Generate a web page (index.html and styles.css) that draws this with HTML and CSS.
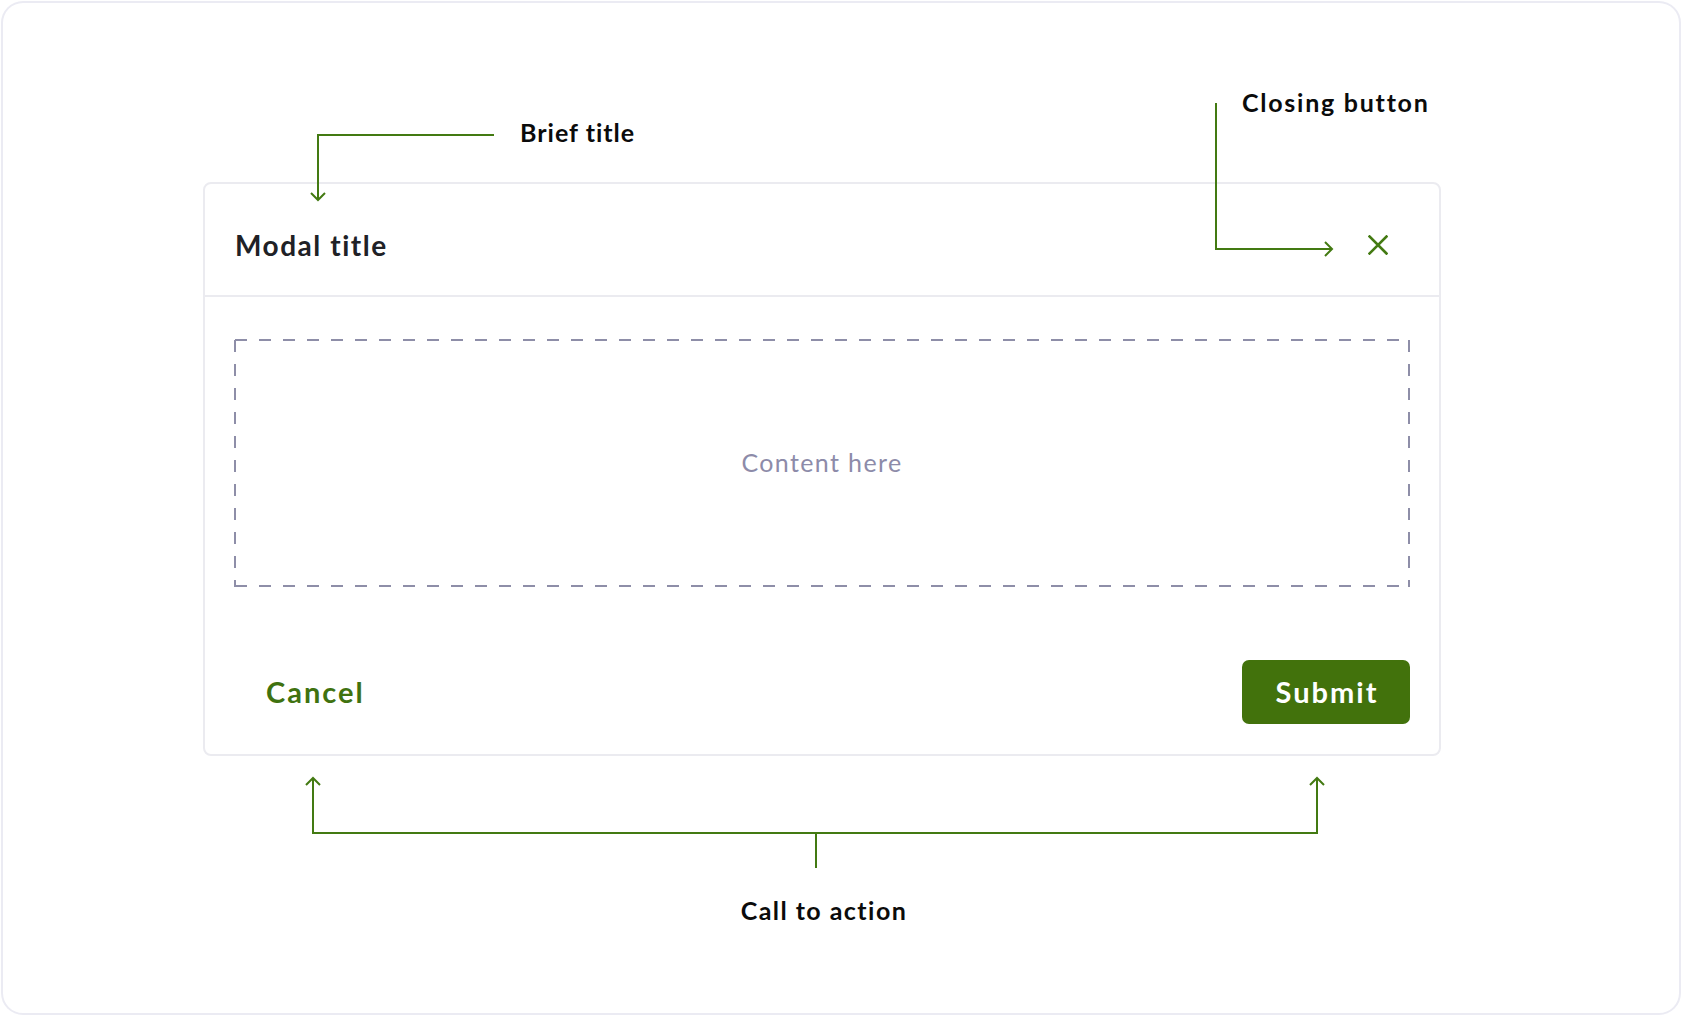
FILE: index.html
```html
<!DOCTYPE html>
<html lang="en">
<head>
<meta charset="utf-8">
<title>Modal anatomy</title>
<link rel="stylesheet" href="styles.css">
</head>
<body>
<div class="frame">
  <div class="modal">
    <div class="modal-header">
      <h2 class="modal-title">Modal title</h2>
      <button class="close-btn" aria-label="Close">
        <svg width="20" height="20" viewBox="0 0 20 20"><path d="M1.5 1.5 L18.5 18.5 M18.5 1.5 L1.5 18.5" stroke="#437a12" stroke-width="2.6" fill="none" stroke-linecap="square"/></svg>
      </button>
    </div>
    <div class="modal-body">
      <div class="placeholder">Content here</div>
    </div>
    <div class="modal-footer">
      <button class="btn-cancel">Cancel</button>
      <button class="btn-submit">Submit</button>
    </div>
  </div>

  <svg class="connectors" width="1680" height="1014" viewBox="1 1 1680 1014">
    <g stroke="#437a12" stroke-width="2" fill="none">
      <path d="M494 135 H318 V199"/>
      <path d="M311 193 L318 200 L325 193"/>
      <path d="M1216 103 V249 H1331"/>
      <path d="M1325 242 L1332 249 L1325 256"/>
      <path d="M313 779 V833 H1317 V779"/>
      <path d="M306 785 L313 778 L320 785"/>
      <path d="M1310 785 L1317 778 L1324 785"/>
      <path d="M816 833 V868"/>
    </g>
  </svg>

  <div class="label label-brief">Brief title</div>
  <div class="label label-close">Closing button</div>
  <div class="label label-cta">Call to action</div>
</div>
</body>
</html>
```

FILE: styles.css
```css
* {
  box-sizing: border-box;
}

html, body {
  margin: 0;
  background: #ffffff;
}

body {
  padding: 1px;
  font-family: Lato, "Noto Sans", "Liberation Sans", sans-serif;
}

.frame {
  position: relative;
  height: 1014px;
  border-radius: 22px;
  box-shadow: inset 0 0 0 2px #ebebf3;
  padding: 181px 0 0 202px;
}

.modal {
  width: 1238px;
  border: 2px solid #ebebf0;
  border-radius: 8px;
  background: #fff;
}

.modal-header {
  height: 113px;
  display: flex;
  align-items: center;
  justify-content: space-between;
  padding: 11px 31px 0 30px;
  border-bottom: 2px solid #ebebf0;
}

.modal-title {
  margin: 0;
  font-size: 28px;
  line-height: 34px;
  font-weight: 700;
  letter-spacing: 0.055em;
  color: #202126;
}

.close-btn {
  width: 60px;
  height: 60px;
  border: 0;
  padding: 0;
  background: transparent;
  display: flex;
  align-items: center;
  justify-content: center;
}

.close-btn svg {
  display: block;
}

.modal-body {
  padding: 42px 29px 0;
}

.placeholder {
  height: 248px;
  display: flex;
  align-items: center;
  justify-content: center;
  font-size: 25px;
  letter-spacing: 0.055em;
  padding-bottom: 2px;
  color: #8d8ba9;
  background:
    linear-gradient(90deg, #8e8ea8 50%, transparent 50%) 1px 0 / 24px 2px repeat-x,
    linear-gradient(90deg, #8e8ea8 50%, transparent 50%) 1px 100% / 24px 2px repeat-x,
    linear-gradient(180deg, #8e8ea8 50%, transparent 50%) 0 1px / 2px 24px repeat-y,
    linear-gradient(180deg, #8e8ea8 50%, transparent 50%) 100% 1px / 2px 24px repeat-y;
}

.modal-footer {
  display: flex;
  justify-content: space-between;
  align-items: center;
  padding: 73px 29px 30px;
}

.btn-cancel,
.btn-submit {
  height: 64px;
  border: 0;
  font-family: Lato, "Noto Sans", "Liberation Sans", sans-serif;
  font-size: 29px;
  font-weight: 700;
  letter-spacing: 0.07em;
  line-height: 62px;
  border-radius: 7px;
}

.btn-cancel {
  background: transparent;
  color: #3f7210;
  padding: 0 32px;
}

.btn-submit {
  width: 168px;
  padding: 0 0 0 2px;
  background: #42720c;
  color: #ffffff;
}

.connectors {
  position: absolute;
  top: 0;
  left: 0;
  pointer-events: none;
}

.label {
  position: absolute;
  font-size: 25px;
  line-height: 30px;
  font-weight: 700;
  color: #0b0b0b;
  white-space: nowrap;
}

.label-brief {
  top: 116px;
  left: 519px;
  letter-spacing: 0.04em;
}

.label-close {
  top: 86px;
  left: 1241px;
  letter-spacing: 0.07em;
}

.label-cta {
  top: 894px;
  left: 722px;
  width: 202px;
  text-align: center;
  letter-spacing: 0.058em;
}
```
